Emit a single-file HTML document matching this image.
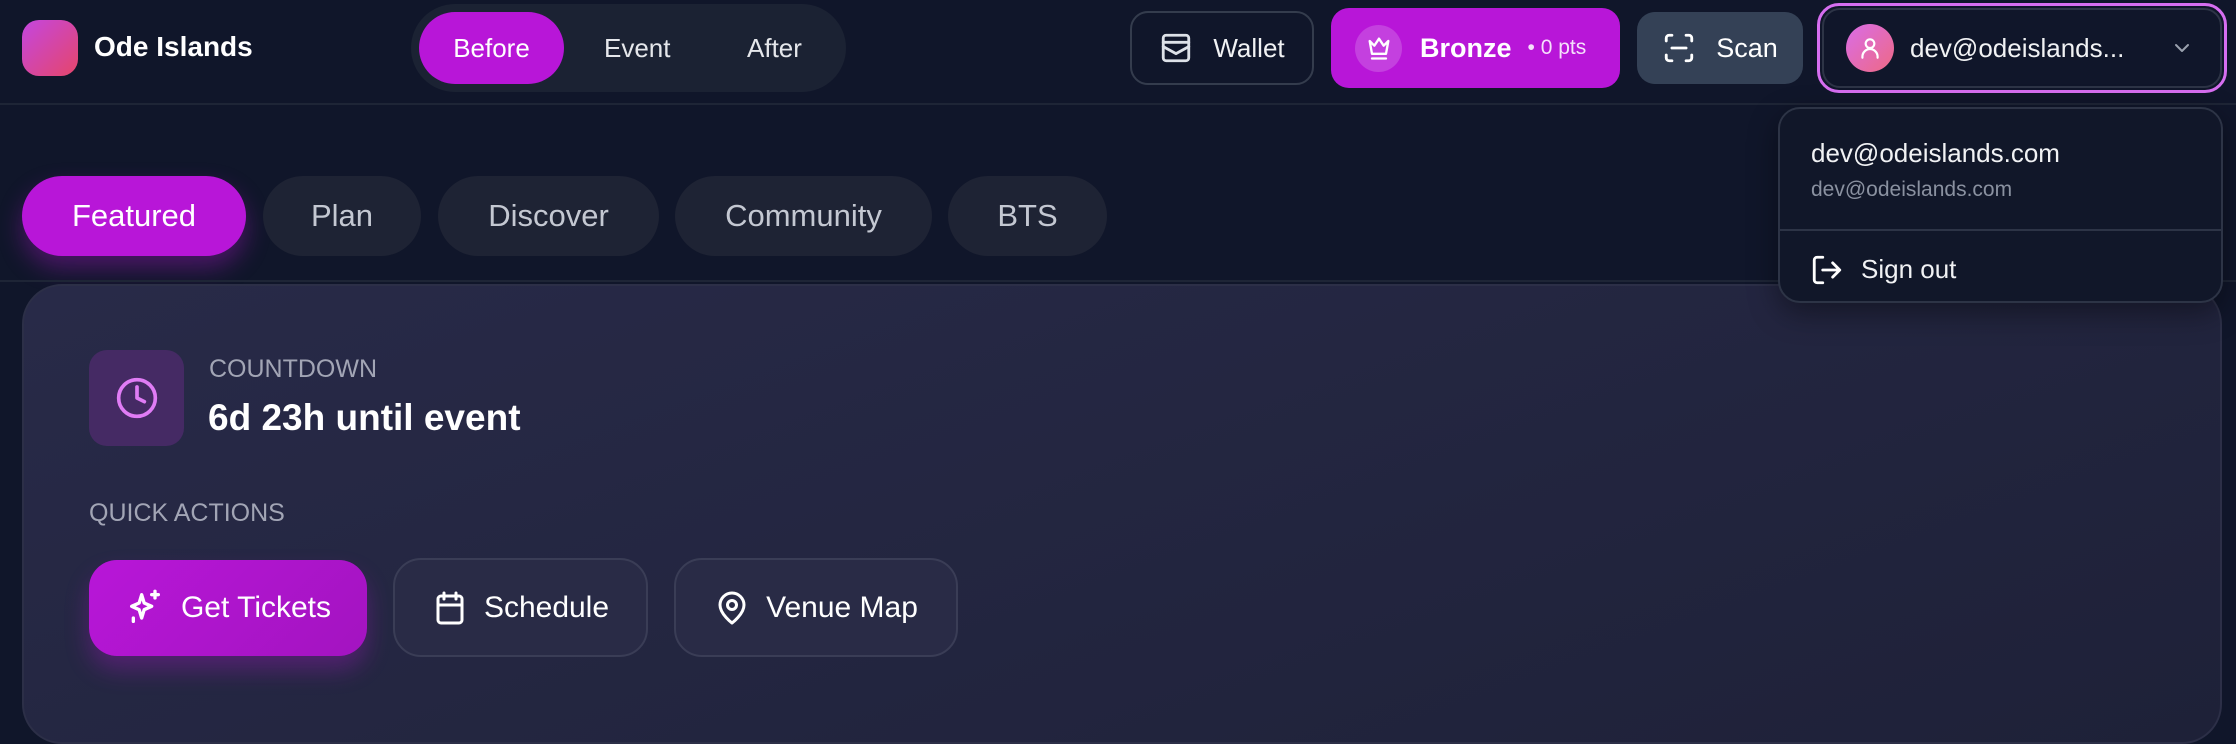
<!DOCTYPE html>
<html><head><meta charset="utf-8"><style>
*{box-sizing:border-box;margin:0;padding:0}
body{width:2236px;height:678px;overflow:hidden;background:#10162a;font-family:"Liberation Sans",sans-serif;color:#fff;position:relative}
.a{position:absolute}
.fl{display:flex;align-items:center;justify-content:center}
svg{fill:none;stroke:currentColor;stroke-width:2;stroke-linecap:round;stroke-linejoin:round}
.tab{position:absolute;top:176px;height:80px;border-radius:40px;background:#1e2334;color:#c4c8d2;font-size:31px}
.qa{position:absolute;border-radius:28px;font-size:30px;gap:16px}
</style></head><body>
<!-- header -->
<div class="a" style="left:22px;top:20px;width:56px;height:56px;border-radius:17px;background:linear-gradient(135deg,#c446e0,#e5466a)"></div>
<div class="a" style="left:94px;top:31px;font-size:28px;font-weight:bold">Ode Islands</div>
<div class="a" style="left:411px;top:4px;width:435px;height:88px;border-radius:44px;background:#1b2233"></div>
<div class="a fl" style="left:419px;top:12px;width:145px;height:72px;border-radius:36px;background:#b816d8;font-size:26px">Before</div>
<div class="a" style="left:604px;top:33px;font-size:26px;color:#e5e7eb">Event</div>
<div class="a" style="left:747px;top:33px;font-size:26px;color:#e5e7eb">After</div>

<div class="a fl" style="left:1130px;top:11px;width:184px;height:74px;border:2px solid #343c4d;border-radius:18px;font-size:26px;gap:20px;color:#f1f2f4">
<svg width="34" height="34" viewBox="0 0 24 24" style="stroke:#dde1e8"><rect x="3" y="3" width="18" height="18" rx="2"/><path d="M3 8h18M3 11l9 5 9-5"/></svg>Wallet</div>
<div class="a fl" style="left:1331px;top:8px;width:289px;height:80px;border-radius:18px;background:#b816d8;gap:12px;justify-content:flex-start;padding-left:24px">
<div class="fl" style="width:47px;height:47px;border-radius:50%;background:rgba(255,255,255,.18)"><svg width="28" height="28" viewBox="0 0 24 24"><path d="M4 6l4 4 4-6 4 6 4-4-2 11H6z M6 21h12"/></svg></div>
<span style="font-size:27px;font-weight:bold;margin-left:6px">Bronze</span><span style="font-size:21px;color:#f5e0fb;margin-left:4px">• 0 pts</span></div>
<div class="a fl" style="left:1637px;top:12px;width:166px;height:72px;border-radius:18px;background:#344156;font-size:27px;gap:20px">
<svg width="34" height="34" viewBox="0 0 24 24"><path d="M3 7V5a2 2 0 0 1 2-2h2M17 3h2a2 2 0 0 1 2 2v2M21 17v2a2 2 0 0 1-2 2h-2M7 21H5a2 2 0 0 1-2-2v-2M7 12h10"/></svg>Scan</div>
<div class="a" style="left:1817px;top:3px;width:410px;height:90px;border:3px solid #d66ef0;border-radius:22px;padding:2px"><div style="width:100%;height:100%;border:2px solid #2d3446;border-radius:18px"></div></div>
<div class="a fl" style="left:1846px;top:24px;width:48px;height:48px;border-radius:50%;background:linear-gradient(135deg,#d96ce8,#ee6a84)"><svg width="26" height="26" viewBox="0 0 24 24"><circle cx="12" cy="8" r="4"/><path d="M5 21v-1a7 7 0 0 1 14 0v1"/></svg></div>
<div class="a" style="left:1910px;top:33px;font-size:26px;color:#f1f2f4">dev@odeislands...</div>
<svg class="a" style="left:2170px;top:36px;stroke:#9aa1ae" width="24" height="24" viewBox="0 0 24 24"><path d="M6 9l6 6 6-6"/></svg>
<div class="a" style="left:0;top:103px;width:2236px;height:2px;background:#1e2536"></div>

<!-- tabs -->
<div class="tab fl" style="left:22px;width:224px;background:#b816d8;color:#fff;box-shadow:0 12px 24px rgba(184,22,216,.35)">Featured</div>
<div class="tab fl" style="left:263px;width:158px">Plan</div>
<div class="tab fl" style="left:438px;width:221px">Discover</div>
<div class="tab fl" style="left:675px;width:257px">Community</div>
<div class="tab fl" style="left:948px;width:159px">BTS</div>
<div class="a" style="left:0;top:280px;width:2236px;height:2px;background:#1e2536"></div>

<!-- card -->
<div class="a" style="left:22px;top:284px;width:2200px;height:460px;border-radius:40px;border:2px solid #2c2f47;background:linear-gradient(160deg,#282a48,#1e2138)"></div>
<div class="a fl" style="left:89px;top:350px;width:95px;height:96px;border-radius:18px;background:#452a64"><svg width="44" height="44" viewBox="0 0 24 24" style="stroke:#e07cf5"><circle cx="12" cy="12" r="10"/><path d="M12 6v6l4 2"/></svg></div>
<div class="a" style="left:209px;top:355px;font-size:25px;color:#a2a5b5">COUNTDOWN</div>
<div class="a" style="left:208px;top:397px;font-size:37px;font-weight:bold">6d 23h until event</div>
<div class="a" style="left:89px;top:499px;font-size:25px;color:#a2a5b5">QUICK ACTIONS</div>
<div class="qa fl" style="left:89px;top:560px;width:278px;height:96px;background:linear-gradient(135deg,#b816d8,#a314c0);box-shadow:0 14px 24px rgba(184,22,216,.3)">
<svg width="40" height="40" viewBox="0 0 24 24"><path d="M10 4l1.5 5L16 11l-4.5 2L10 18l-1.5-5L4 11l4.5-2z M18 2v4M16 4h4M5 18v2"/></svg>Get Tickets</div>
<div class="qa fl" style="left:393px;top:558px;width:255px;height:99px;border:2px solid #3a3d56;background:#292b46">
<svg width="36" height="36" viewBox="0 0 24 24"><rect x="4" y="4" width="16" height="18" rx="2"/><path d="M8 2v4M16 2v4M4 10h16"/></svg>Schedule</div>
<div class="qa fl" style="left:674px;top:558px;width:284px;height:99px;border:2px solid #3a3d56;background:#292b46">
<svg width="36" height="36" viewBox="0 0 24 24"><path d="M20 10c0 6-8 12-8 12S4 16 4 10a8 8 0 0 1 16 0z"/><circle cx="12" cy="10" r="3"/></svg>Venue Map</div>

<!-- dropdown -->
<div class="a" style="left:1778px;top:107px;width:445px;height:196px;border:2px solid #2d3446;border-radius:22px;background:#111729;box-shadow:0 10px 30px rgba(0,0,0,.4)">
<div class="a" style="left:31px;top:29px;font-size:26px;color:#f1f2f4">dev@odeislands.com</div>
<div class="a" style="left:31px;top:69px;font-size:21px;color:#8a91a0">dev@odeislands.com</div>
<div class="a" style="left:0;top:120px;width:441px;height:2px;background:#2d3446"></div>
<svg class="a" style="left:30px;top:144px" width="34" height="34" viewBox="0 0 24 24"><path d="M9 21H5a2 2 0 0 1-2-2V5a2 2 0 0 1 2-2h4M16 17l5-5-5-5M21 12H9"/></svg>
<div class="a" style="left:81px;top:145px;font-size:26px;color:#f1f2f4">Sign out</div>
</div>
</body></html>
